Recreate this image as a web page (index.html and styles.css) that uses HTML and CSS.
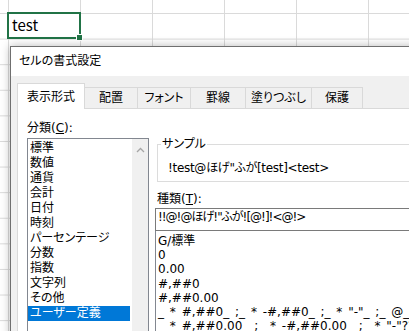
FILE: index.html
```html
<!DOCTYPE html>
<html lang="ja">
<head>
<meta charset="utf-8">
<link rel="stylesheet" href="styles.css">
</head>
<body>
<div class="sheet">
  <div class="cell-sel">test<span class="handle"></span></div>
</div>
<div class="dialog">
  <div class="titlebar">セルの書式設定</div>
  <div class="dbody">
    <div class="tabs">
      <div class="tab active t1">表示形式</div>
      <div class="tab t2">配置</div>
      <div class="tab t3">フォント</div>
      <div class="tab t4">罫線</div>
      <div class="tab t5">塗りつぶし</div>
      <div class="tab t6">保護</div>
    </div>
    <div class="panel">
      <div class="leftcol">
        <div class="label">分類(<u>C</u>):</div>
        <div class="listbox">
          <ul class="items">
            <li>標準</li>
            <li>数値</li>
            <li>通貨</li>
            <li>会計</li>
            <li>日付</li>
            <li>時刻</li>
            <li>パーセンテージ</li>
            <li>分数</li>
            <li>指数</li>
            <li>文字列</li>
            <li>その他</li>
            <li class="sel">ユーザー定義</li>
          </ul>
          <div class="vscroll">
            <svg class="up" width="9" height="6" viewBox="0 0 9 6"><path d="M1 5 L4.5 1.5 L8 5" fill="none" stroke="#a6a6a6" stroke-width="1.3"/></svg>
          </div>
        </div>
      </div>
      <div class="rightcol">
        <fieldset class="sample">
          <legend>サンプル</legend>
          <div class="sample-text">!test@ほげ"ふが[test]&lt;test&gt;</div>
        </fieldset>
        <div class="label kind">種類(<u>T</u>):</div>
        <div class="textbox">!!@!@ほげ!"ふが![@!]!&lt;@!&gt;</div>
        <ul class="typelist">
          <li>G/標準</li>
          <li>0</li>
          <li>0.00</li>
          <li>#,##0</li>
          <li>#,##0.00</li>
          <li>_ * #,##0_ ;_ * -#,##0_ ;_ * "-"_ ;_ @_</li>
          <li>_ * #,##0.00_ ;_ * -#,##0.00_ ;_ * "-"??_ ;_ @_</li>
        </ul>
      </div>
    </div>
  </div>
</div>
</body>
</html>
```
FILE: styles.css
```css
html, body {
  margin: 0;
  padding: 0;
}
body {
  width: 409px;
  height: 331px;
  overflow: hidden;
  position: relative;
  font-family: "Noto Sans CJK JP", "Noto Sans", sans-serif;
  font-size: 12px;
  color: #000;
  background: #fff;
}
.sheet {
  box-sizing: border-box;
  height: 331px;
  padding: 12px 0 0 7px;
  background-color: #fff;
  background-image:
    linear-gradient(to right, #dadada 0, #dadada 1px, transparent 1px),
    linear-gradient(to bottom, #dadada 0, #dadada 1px, transparent 1px);
  background-size: 72px 100%, 100% 25.6px;
  background-position: 8px 0, 0 13px;
}
.cell-sel {
  box-sizing: border-box;
  position: relative;
  width: 74px;
  height: 27px;
  border: 2px solid #217346;
  background: #fff;
  padding-left: 3px;
  font-size: 15px;
  line-height: 22px;
}
.handle {
  position: absolute;
  right: -4px;
  bottom: -4px;
  width: 7px;
  height: 7px;
  box-sizing: border-box;
  background: #217346;
  border: 1px solid #fff;
}
.dialog {
  position: absolute;
  left: 10px;
  top: 46px;
  width: 430px;
  height: 320px;
  border: 1px solid #6f6f6f;
  background: #f0f0f0;
  box-shadow: 0 0 9px rgba(0, 0, 0, 0.28);
  font-family: "DejaVu Sans", "Noto Sans CJK JP", sans-serif;
  font-feature-settings: "palt";
}
.titlebar {
  height: 29px;
  line-height: 29px;
  padding-left: 8px;
  background: #fff;
}
.dbody {
  padding: 7px 0 0 6px;
}
.tabs {
  display: flex;
  align-items: flex-end;
  height: 25px;
}
.tab {
  box-sizing: border-box;
  height: 21px;
  padding-top: 3px;
  line-height: 15px;
  text-align: center;
  border: 1px solid #d9d9d9;
  border-bottom: none;
  background: #f0f0f0;
  margin-left: -1px;
}
.tab.active {
  height: 26px;
  padding-top: 6px;
  margin-bottom: -1px;
  margin-left: 0;
  background: #fff;
  position: relative;
  z-index: 1;
}
.t1 { width: 68px; }
.t2 { width: 54px; }
.t3 { width: 54px; }
.t4 { width: 56px; }
.t5 { width: 67px; }
.t6 { width: 52px; }
.panel {
  display: flex;
  height: 260px;
  border: 1px solid #d9d9d9;
  background: #fff;
}
.leftcol {
  padding: 12px 0 0 9px;
}
.label {
  line-height: 15px;
}
.label u {
  text-underline-offset: 1px;
}
.listbox {
  display: flex;
  width: 122px;
  height: 210px;
  box-sizing: border-box;
  margin-top: 2px;
  border: 1px solid #828790;
}
.items {
  flex: 1;
  list-style: none;
  margin: 0;
  padding: 2px 0 0 0;
}
.items li {
  line-height: 15px;
  padding-left: 2px;
  margin-right: 2px;
}
.items li.sel {
  background: #0078d7;
  color: #fff;
}
.vscroll {
  width: 16px;
  background: #f0f0f0;
  display: flex;
  justify-content: center;
  align-items: flex-start;
  padding-top: 8px;
}
.rightcol {
  flex: 1;
  padding: 28px 0 0 8px;
}
.sample {
  margin: 0;
  padding: 9px 0 5px 10px;
  border: 1px solid #dcdcdc;
}
.sample legend {
  padding: 0 1px;
  margin-left: -7px;
  line-height: 15px;
}
.sample-text {
  line-height: 15px;
  white-space: nowrap;
  letter-spacing: -0.3px;
}
.kind {
  margin-top: 10px;
}
.textbox {
  box-sizing: border-box;
  height: 23px;
  margin: 1px 0 0 -2px;
  border: 1px solid #7a7a7a;
  padding: 1px 0 0 2px;
  line-height: 15px;
  white-space: nowrap;
  letter-spacing: -1px;
}
.typelist {
  list-style: none;
  margin: 0 0 0 -2px;
  padding: 3px 0 0 2px;
  border: 1px solid #828790;
  border-top: none;
  height: 120px;
  white-space: nowrap;
  word-spacing: 2px;
}
.typelist li {
  line-height: 14.2px;
}
```
